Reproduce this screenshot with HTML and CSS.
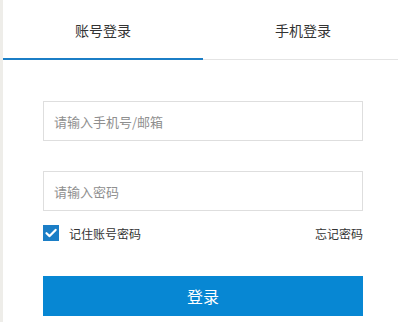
FILE: index.html
```html
<!DOCTYPE html>
<html lang="zh-CN">
<head>
<meta charset="utf-8">
<title>登录</title>
<link rel="stylesheet" href="styles.css">
</head>
<body>
<div class="page">
  <div class="tabs">
    <div class="tab active">账号登录</div>
    <div class="tab">手机登录</div>
  </div>
  <form class="form">
    <input class="field" type="text" placeholder="请输入手机号/邮箱">
    <input class="field" type="password" placeholder="请输入密码">
    <div class="options">
      <label class="remember">
        <span class="check"><svg width="16" height="16" viewBox="0 0 16 16"><path d="M3.5 8.2 L6.6 11.1 L12.6 4.9" fill="none" stroke="#fff" stroke-width="2.2" stroke-linecap="round" stroke-linejoin="round"/></svg></span>
        <span class="remember-text">记住账号密码</span>
      </label>
      <a class="forgot">忘记密码</a>
    </div>
    <button class="submit" type="button">登录</button>
  </form>
</div>
</body>
</html>
```

FILE: styles.css
```css
* { box-sizing: border-box; }
html, body {
  margin: 0;
  padding: 0;
  background: #ffffff;
  overflow: hidden;
}
body {
  font-family: "Noto Sans CJK SC", "Noto Sans", sans-serif;
  color: #333333;
}
.page {
  width: 403px;
  height: 322px;
  border-left: 3px solid #eeede9;
}
.tabs {
  display: flex;
  height: 60px;
  border-bottom: 1px solid #e4e4e4;
}
.tab {
  width: 200px;
  height: 59px;
  display: flex;
  align-items: center;
  justify-content: center;
  font-size: 14px;
  color: #333333;
  padding-bottom: 0;
}
.tab.active {
  height: 60px;
  border-bottom: 2px solid #1b7ec6;
  padding-top: 2px;
}
.form {
  margin: 0;
  padding: 41px 0 0 40px;
  display: flex;
  flex-direction: column;
  width: 360px;
}
.field {
  width: 320px;
  height: 40px;
  margin: 0 0 30px 0;
  padding: 0 10px;
  border: 1px solid #dedede;
  border-radius: 0;
  outline: none;
  font-family: "Noto Sans CJK SC", "Noto Sans", sans-serif;
  font-size: 13px;
  color: #333;
  background: #fff;
}
.field:last-of-type { margin-bottom: 0; }
.field::placeholder { color: #8f8f8f; }
.options {
  width: 320px;
  height: 24px;
  margin-top: 10px;
  display: flex;
  align-items: center;
  justify-content: space-between;
  font-size: 12px;
}
.remember {
  display: flex;
  align-items: center;
}
.check {
  width: 16px;
  height: 16px;
  background: #1b7ec6;
  display: flex;
}
.remember-text {
  margin-left: 10px;
  color: #333;
}
.forgot {
  color: #333;
}
.submit {
  width: 320px;
  height: 40px;
  margin-top: 31px;
  border: none;
  border-radius: 0;
  background: #0787d3;
  color: #ffffff;
  font-family: "Noto Sans CJK SC", "Noto Sans", sans-serif;
  font-size: 16px;
  padding: 0;
}
```
